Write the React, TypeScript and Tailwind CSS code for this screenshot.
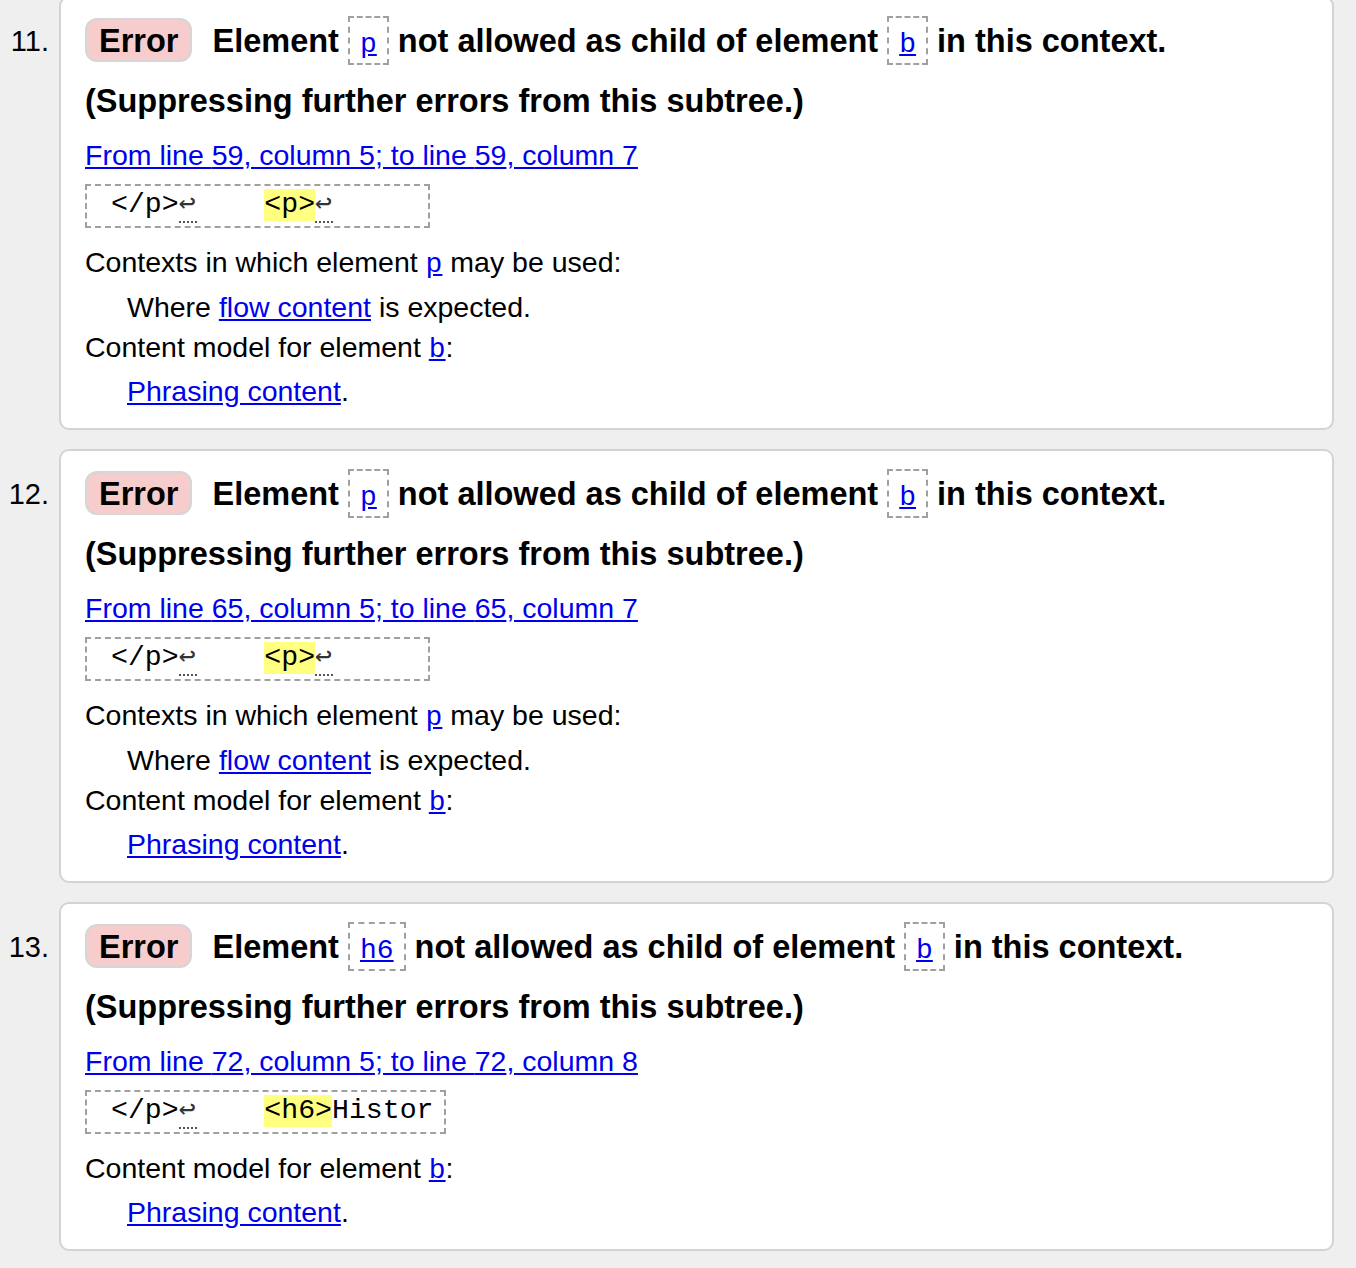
import React from 'react';

type Piece = { text: string; kind?: 'hl' | 'lf' };

interface ValidatorError {
  n: number;
  el: string;
  line: number;
  from: number;
  to: number;
  extract: Piece[];
  contexts: boolean;
}

const ERRORS: ValidatorError[] = [
  {
    n: 11,
    el: 'p',
    line: 59,
    from: 5,
    to: 7,
    extract: [{ text: '</p>' }, { text: '↩', kind: 'lf' }, { text: '    ' }, { text: '<p>', kind: 'hl' }, { text: '↩', kind: 'lf' }, { text: '     ' }],
    contexts: true,
  },
  {
    n: 12,
    el: 'p',
    line: 65,
    from: 5,
    to: 7,
    extract: [{ text: '</p>' }, { text: '↩', kind: 'lf' }, { text: '    ' }, { text: '<p>', kind: 'hl' }, { text: '↩', kind: 'lf' }, { text: '     ' }],
    contexts: true,
  },
  {
    n: 13,
    el: 'h6',
    line: 72,
    from: 5,
    to: 8,
    extract: [{ text: '</p>' }, { text: '↩', kind: 'lf' }, { text: '    ' }, { text: '<h6>', kind: 'hl' }, { text: 'Histor' }],
    contexts: false,
  },
];

const SANS = "font-['Liberation_Sans',Arial,sans-serif]";
const MONO = "font-['Liberation_Mono','DejaVu_Sans_Mono',monospace]";

const ElLink = ({ name }: { name: string }) => (
  <a href="#" className={`${MONO} text-[28px] leading-none text-[#0000ee] underline`}>
    {name}
  </a>
);

const CodeBox = ({ name }: { name: string }) => (
  <code className="inline-block border-2 border-dashed border-[#a0a0a0] px-[10px] pt-[10px] pb-[3px] leading-[32px] font-normal">
    <ElLink name={name} />
  </code>
);

const ErrorItem = ({ err }: { err: ValidatorError }) => (
  <li className="flex items-start pr-[22px]">
    <div className={`w-[59px] shrink-0 pr-[10px] pt-[25px] text-right text-[29px] leading-[40px] text-black ${SANS}`}>
      {err.n}.
    </div>
    <div className={`flex-1 rounded-[10px] border-2 border-[#d3d3d3] bg-white px-[24px] pt-[18px] pb-[17px] text-black ${SANS}`}>
      <div className="text-[32.5px] font-bold leading-none">
        <strong className="mr-[11px] inline-block rounded-[12px] border-2 border-[#d6d6d6] bg-[#f6cccc] px-[12px] pt-[3px] pb-[1px] leading-[36px]">
          Error
        </strong>{' '}
        Element <CodeBox name={err.el} /> not allowed as child of element <CodeBox name="b" /> in this context.
      </div>
      <div className="mt-[18px] text-[32.5px] font-bold leading-[36px]">(Suppressing further errors from this subtree.)</div>
      <p className="mt-[16px] text-[28.5px] leading-[40px]">
        <a href="#" className="text-[#0000ee] underline">
          From line {err.line}, column {err.from}; to line {err.line}, column {err.to}
        </a>
      </p>
      <div className="mt-[9px] flex">
        <code className={`${MONO} inline-block whitespace-pre border-2 border-dashed border-[#a0a0a0] pl-[24px] pr-[10px] pt-[3px] pb-[5px] text-[28.2px] leading-[32px] text-black`}>
          {err.extract.map((piece, i) =>
            piece.kind === 'hl' ? (
              <b key={i} className="inline-block bg-[#ffff80] font-normal">
                {piece.text}
              </b>
            ) : piece.kind === 'lf' ? (
              <span key={i} className="-mb-[2px] inline-block w-[18px] border-b-2 border-dotted border-[#555] text-[#333]">
                {piece.text}
              </span>
            ) : (
              <span key={i}>{piece.text}</span>
            )
          )}
        </code>
      </div>
      <dl className="mt-[14px] text-[28.5px] leading-[40px]">
        {err.contexts && (
          <>
            <dt>
              Contexts in which element <ElLink name={err.el} /> may be used:
            </dt>
            <dd className="mt-[5px] ml-[42px]">
              Where{' '}
              <a href="#" className="text-[#0000ee] underline">
                flow content
              </a>{' '}
              is expected.
            </dd>
          </>
        )}
        <dt>
          Content model for element <ElLink name="b" />:
        </dt>
        <dd className="mt-[4px] ml-[42px]">
          <a href="#" className="text-[#0000ee] underline">
            Phrasing content
          </a>
          .
        </dd>
      </dl>
    </div>
  </li>
);

export default function App() {
  return (
    <div className="min-h-[1268px] overflow-hidden bg-[#efefef]">
      <ol className="-mt-[4px] flex flex-col gap-[19px] pb-[15px]">
        {ERRORS.map((err) => (
          <ErrorItem key={err.n} err={err} />
        ))}
      </ol>
    </div>
  );
}
